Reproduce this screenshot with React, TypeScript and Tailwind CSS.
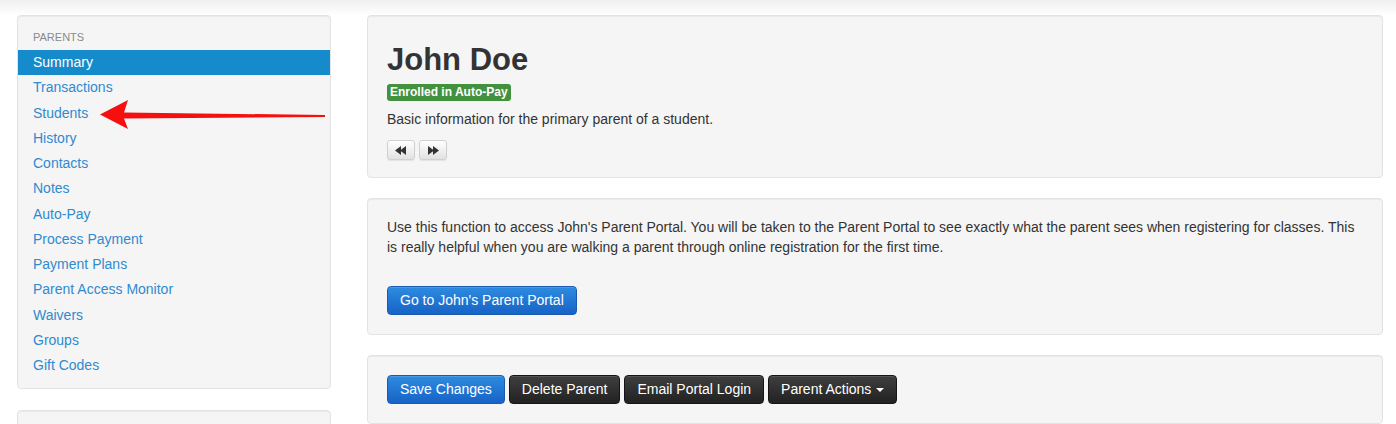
import React from 'react'

const navItems = [
    'Summary',
    'Transactions',
    'Students',
    'History',
    'Contacts',
    'Notes',
    'Auto-Pay',
    'Process Payment',
    'Payment Plans',
    'Parent Access Monitor',
    'Waivers',
    'Groups',
    'Gift Codes',
]

const well = 'bg-[#f5f5f5] border border-[#e3e3e3] rounded shadow-[inset_0_1px_1px_rgba(0,0,0,0.05)]'
const darkBtn =
    'h-[29px] px-[12px] rounded text-[14px] text-white bg-gradient-to-b from-[#3f3f3f] to-[#222222] border border-[#151515] shadow-[inset_0_1px_0_rgba(255,255,255,0.12)]'
const blueBtn =
    'h-[29px] px-[12px] rounded text-[14px] text-white bg-gradient-to-b from-[#2e8be0] to-[#1763c6] border border-[#1a5bb0] shadow-[inset_0_1px_0_rgba(255,255,255,0.15)]'
const navBtn =
    'w-[28px] h-[20px] flex items-center justify-center rounded-[3px] border border-[#d0d0d0] bg-gradient-to-b from-white to-[#e2e2e2] shadow-[0_1px_1px_rgba(0,0,0,0.08)]'

function Rewind({ flip }: { flip?: boolean }) {
    return (
        <svg width="12" height="9" viewBox="0 0 12 9" className={flip ? 'scale-x-[-1]' : ''}>
            <path d="M0 4.5 L6 0 L6 9 Z" fill="#333" />
            <path d="M5 4.5 L11 0 L11 9 Z" fill="#333" />
        </svg>
    )
}

export default function App() {
    return (
        <div
            className="relative w-[1396px] h-[424px] overflow-hidden bg-white text-[#333]"
            style={{ fontFamily: '"Liberation Sans", Arial, Helvetica, sans-serif' }}
        >
            {/* faint shadow under the (cropped) top bar */}
            <div className="h-[15px] bg-gradient-to-b from-[#efefef] to-white" />

            <div className="flex gap-[36px] pl-[17px]">
                {/* sidebar */}
                <div className="w-[314px] shrink-0 flex flex-col gap-[21px]">
                    <div className={well + ' pb-[10px]'}>
                        <div className="pt-[14px] pb-[5px] pl-[15px] text-[11px] leading-[15px] text-[#8a8a8a] uppercase">
                            Parents
                        </div>
                        <ul>
                            {navItems.map((item, i) => (
                                <li
                                    key={item}
                                    className={
                                        'h-[25.25px] flex items-center pl-[15px] text-[14px] ' +
                                        (i === 0 ? 'bg-[#168bcc] text-white' : 'text-[#2f8ad0]')
                                    }
                                >
                                    {item}
                                </li>
                            ))}
                        </ul>
                    </div>
                    <div className={well + ' h-[60px]'} />
                </div>

                {/* main column */}
                <div className="w-[1016px] shrink-0 flex flex-col gap-[20px]">
                    <div className={well + ' pt-[27px] pb-[17px] px-[19px]'}>
                        <h1 className="text-[31px] leading-[34px] font-bold text-[#333]">John Doe</h1>
                        <span className="inline-block mt-[7px] h-[17px] px-[3px] rounded-[3px] bg-[#42913f] text-white text-[12px] font-bold leading-[17px]">
                            Enrolled in Auto-Pay
                        </span>
                        <p className="mt-[6px] text-[14px] leading-[20px]">Basic information for the primary parent of a student.</p>
                        <div className="mt-[11px] flex gap-[4px]">
                            <button className={navBtn}>
                                <Rewind />
                            </button>
                            <button className={navBtn}>
                                <Rewind flip />
                            </button>
                        </div>
                    </div>

                    <div className={well + ' pt-[19px] pb-[19px] px-[19px]'}>
                        <p className="text-[14px] leading-[19.5px] pr-[6px]">
                            Use this function to access John's Parent Portal. You will be taken to the Parent Portal to see exactly what the
                            parent sees when registering for classes. This is really helpful when you are walking a parent through online
                            registration for the first time.
                        </p>
                        <button className={blueBtn + ' mt-[29px]'}>Go to John's Parent Portal</button>
                    </div>

                    <div className={well + ' pt-[19px] pb-[19px] px-[19px]'}>
                        <div className="flex gap-[4px]">
                            <button className={blueBtn}>Save Changes</button>
                            <button className={darkBtn}>Delete Parent</button>
                            <button className={darkBtn}>Email Portal Login</button>
                            <button className={darkBtn + ' flex items-center gap-[5px]'}>
                                Parent Actions
                                <span className="w-0 h-0 border-x-[4px] border-x-transparent border-t-[4px] border-t-white" />
                            </button>
                        </div>
                    </div>
                </div>
            </div>

            {/* red annotation arrow */}
            <svg className="absolute left-0 top-0 pointer-events-none" width="340" height="140" viewBox="0 0 340 140">
                <polygon
                    points="100,114.5 128,100 124,112.5 325,115 325,117 124,118.5 128,129"
                    fill="#f50f0f"
                />
            </svg>
        </div>
    )
}
